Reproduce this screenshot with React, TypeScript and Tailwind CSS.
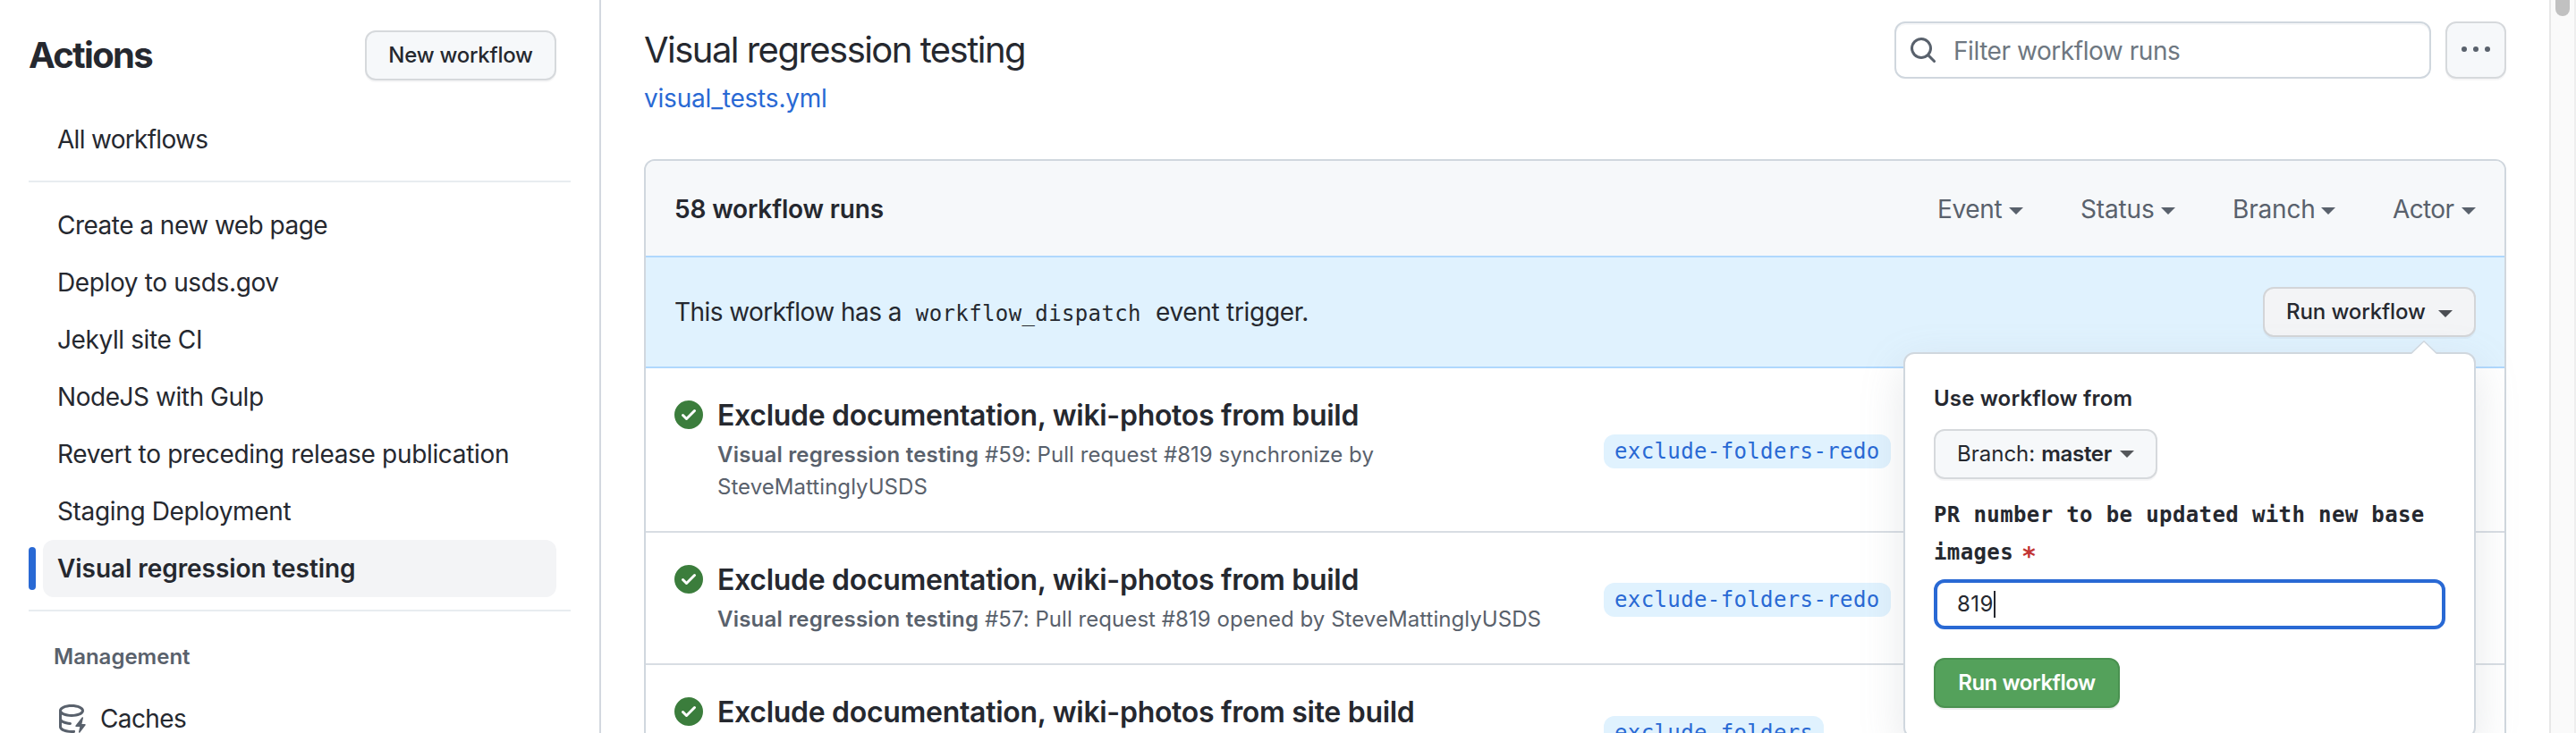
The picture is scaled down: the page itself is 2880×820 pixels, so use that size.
import React from "react";

const MONO = "font-['DejaVu_Sans_Mono',monospace] tracking-[0.38px]";

function Caret({ className = "" }: { className?: string }) {
  return (
    <span
      className={`h-0 w-0 shrink-0 border-x-[8px] border-t-[8px] border-x-transparent border-t-current ${className}`}
    />
  );
}

function SearchIcon() {
  return (
    <svg viewBox="0 0 16 16" className="size-8 shrink-0" fill="currentColor">
      <path
        fillRule="evenodd"
        d="M11.5 7a4.499 4.499 0 11-8.998 0A4.499 4.499 0 0111.5 7zm-.82 4.74a6 6 0 111.06-1.06l3.04 3.04a.75.75 0 11-1.06 1.06l-3.04-3.04z"
      />
    </svg>
  );
}

function KebabIcon() {
  return (
    <svg viewBox="0 0 16 16" className="size-8" fill="currentColor">
      <circle cx="1.5" cy="7.5" r="1.5" />
      <circle cx="8" cy="7.5" r="1.5" />
      <circle cx="14.5" cy="7.5" r="1.5" />
    </svg>
  );
}

function CheckIcon() {
  return (
    <svg viewBox="0 0 16 16" className="mt-9 size-8 shrink-0" fill="#3b7d3c">
      <path
        fillRule="evenodd"
        d="M8 16A8 8 0 108 0a8 8 0 000 16zm3.78-9.72a.75.75 0 00-1.06-1.06L6.75 9.19 5.28 7.72a.75.75 0 00-1.06 1.06l2 2a.75.75 0 001.06 0l4.5-4.5z"
      />
    </svg>
  );
}

function CacheIcon() {
  return (
    <svg viewBox="0 0 16 16" className="size-8 shrink-0 text-[#59616c]" fill="currentColor">
      <path d="M2.5 5.724V8c0 .248.238.7 1.169 1.159.874.43 2.144.745 3.62.822a.75.75 0 1 1-.078 1.498c-1.622-.085-3.102-.432-4.204-.975a5.565 5.565 0 0 1-.507-.28V12.5c0 .133.058.318.282.551.227.237.591.483 1.101.707 1.015.447 2.47.742 4.117.742.406 0 .802-.018 1.183-.052a.751.751 0 1 1 .134 1.494C8.89 15.98 8.45 16 8 16c-1.805 0-3.475-.32-4.721-.869-.623-.274-1.173-.619-1.579-1.041-.408-.425-.7-.964-.7-1.59v-9c0-.626.292-1.165.7-1.591.406-.42.956-.766 1.579-1.04C4.525.32 6.195 0 8 0c1.806 0 3.476.32 4.721.869.623.274 1.173.619 1.579 1.041.408.425.7.964.7 1.59 0 .626-.292 1.165-.7 1.591-.406.42-.956.766-1.578 1.04C11.475 6.68 9.805 7 8 7c-1.805 0-3.475-.32-4.721-.869a6.15 6.15 0 0 1-.779-.407Zm0-2.224c0 .133.058.318.282.551.227.237.591.483 1.101.707C4.898 5.205 6.353 5.5 8 5.5c1.646 0 3.101-.295 4.118-.742.508-.224.873-.471 1.1-.708.224-.232.282-.417.282-.55 0-.133-.058-.318-.282-.551-.227-.237-.591-.483-1.101-.707C11.102 1.795 9.647 1.5 8 1.5c-1.646 0-3.101.295-4.118.742-.508.224-.873.471-1.1.708-.224.232-.282.417-.282.55Z" />
      <path d="M14.49 7.582a.375.375 0 0 0-.66-.313l-3.625 4.625a.375.375 0 0 0 .295.606h2.127l-.619 2.922a.375.375 0 0 0 .666.304l3.125-4.125A.375.375 0 0 0 15.5 11h-1.778l.769-3.418Z" />
    </svg>
  );
}

const workflows = [
  { name: "Create a new web page", track: "tracking-[-0.52px]" },
  { name: "Deploy to usds.gov", track: "tracking-[-0.37px]" },
  { name: "Jekyll site CI", track: "tracking-[-0.4px]" },
  { name: "NodeJS with Gulp", track: "tracking-[-0.45px]" },
  { name: "Revert to preceding release publication", track: "tracking-[-0.33px]" },
  { name: "Staging Deployment", track: "tracking-[-0.35px]" },
];

const filters = [
  { name: "Event", track: "tracking-[-0.37px]", width: "w-[96px]" },
  { name: "Status", track: "tracking-[-0.14px]", width: "w-[106px]" },
  { name: "Branch", track: "tracking-[-0.17px]", width: "w-[115px]" },
  { name: "Actor", track: "tracking-[-0.65px]", width: "w-[93px]" },
];

type Run = { title: string; detail?: string; branch: string; height: string };

const runs: Run[] = [
  {
    title: "Exclude documentation, wiki-photos from build",
    detail: "#59: Pull request #819 synchronize by SteveMattinglyUSDS",
    branch: "exclude-folders-redo",
    height: "h-[184px]",
  },
  {
    title: "Exclude documentation, wiki-photos from build",
    detail: "#57: Pull request #819 opened by SteveMattinglyUSDS",
    branch: "exclude-folders-redo",
    height: "h-[148px]",
  },
  {
    title: "Exclude documentation, wiki-photos from site build",
    branch: "exclude-folders",
    height: "h-[148px]",
  },
];

function Sidebar() {
  return (
    <aside className="h-full w-[672px] shrink-0 border-r-2 border-[#d3d8df] pl-8">
      <div className="flex h-[124px] items-center justify-between pr-12">
        <h2 className="text-[40px] font-bold leading-[60px] tracking-[-1.7px]">Actions</h2>
        <button className="h-14 w-[214px] rounded-xl border-2 border-[#d6d9dc] bg-[#f6f8fa] text-2xl font-medium tracking-[-0.25px] shadow-[0_2px_0_rgba(31,35,40,0.04)]">
          New workflow
        </button>
      </div>
      <nav className="text-[28px]">
        <div className="mr-8 h-20 border-b-2 border-[#e8ecf0] pl-8 leading-[64px] tracking-[-0.7px]">All workflows</div>
        <ul className="mr-8 h-[480px] border-b-2 border-[#e8ecf0] pt-4">
          {workflows.map((w) => (
            <li key={w.name} className={`h-16 pl-8 leading-[64px] ${w.track}`}>
              {w.name}
            </li>
          ))}
          <li className="mr-4 flex h-16 items-center gap-2">
            <span className="h-12 w-2 rounded-full bg-[#2969d4]" />
            <span className="h-16 flex-1 rounded-xl bg-[#f3f4f6] pl-4 font-semibold leading-[64px] tracking-[-0.06px]">
              Visual regression testing
            </span>
          </li>
        </ul>
        <h3 className="mt-8 pl-7 text-2xl font-semibold leading-[38px] text-[#59616c]">Management</h3>
        <div className="mt-[18px] flex h-16 items-center gap-4 pl-8">
          <CacheIcon />
          <span className="tracking-[-0.6px]">Caches</span>
        </div>
      </nav>
    </aside>
  );
}

function DispatchPopup() {
  return (
    <div className="absolute left-[1406px] top-[214px] h-[432px] w-[640px] rounded-xl border-2 border-[#d0d7de] bg-white px-8 shadow-[0_16px_48px_rgba(140,149,159,0.22)]">
      <svg viewBox="0 0 28 16" className="absolute right-[42px] top-[-15px] h-4 w-7">
        <path d="M0 15 14 1 28 15V16H0Z" fill="#fff" />
        <path d="M0 14 14 0.8 28 14" fill="none" stroke="#d0d7de" strokeWidth="1.5" />
      </svg>
      <h4 className="pt-8 text-2xl font-semibold leading-9 tracking-[0.15px]">Use workflow from</h4>
      <button className="mt-4 flex h-14 items-center rounded-xl border-2 border-[#d6d9dc] bg-[#f6f8fa] pl-6 pr-6 text-2xl shadow-[0_2px_0_rgba(31,35,40,0.04)]">
        <span>Branch:</span>
        <span className="ml-[7px] font-semibold tracking-[-0.3px]">master</span>
        <Caret className="ml-[9px] text-[#54575b]" />
      </button>
      <label className={`mt-[19px] block h-[84px] text-2xl font-bold leading-[42px] ${MONO}`}>
        PR number to be updated with new base
        <br />
        images<span className="ml-[9px] align-[-6px] text-[28px] leading-none text-[#c23434]">*</span>
      </label>
      <div className="mt-[9px] flex h-14 w-[572px] items-center rounded-xl border-4 border-[#2969d4] pl-[22px] text-2xl tracking-[0.5px]">
        819
        <span className="h-[30px] w-[2px] bg-[#25282f]" />
      </div>
      <button className="mt-8 h-14 w-[208px] rounded-xl border-2 border-[#4a9150] bg-[#54a15b] text-2xl font-semibold tracking-[-0.45px] text-white shadow-[0_2px_0_rgba(31,35,40,0.08)]">
        Run workflow
      </button>
    </div>
  );
}

function RunRow({ run, last }: { run: Run; last: boolean }) {
  return (
    <li className={`flex shrink-0 border-[#d8dde3] px-8 ${run.height} ${last ? "" : "border-b-2"}`}>
      <CheckIcon />
      <div className="ml-4 w-[960px] pt-[29px]">
        <h3 className="whitespace-nowrap text-[32px] font-semibold leading-[47px] tracking-[-0.3px]">{run.title}</h3>
        {run.detail && (
          <p className="mt-[3px] w-[930px] text-2xl leading-9 tracking-[0.05px] text-[#59616c]">
            <span className="font-semibold tracking-[0.2px]">Visual regression testing</span> {run.detail}
          </p>
        )}
      </div>
      <div className="ml-[31px] flex items-center pt-1">
        <span className={`h-[38px] rounded-xl bg-[#e0f2fe] px-3 text-2xl leading-[38px] text-[#2969d4] ${MONO}`}>
          {run.branch}
        </span>
      </div>
    </li>
  );
}

export default function App() {
  return (
    <div className="flex h-[820px] w-[2880px] overflow-hidden bg-white font-[Inter,sans-serif] text-[#25282f]">
      <Sidebar />
      <main className="h-full flex-1 pl-12 pr-12">
        <header className="flex h-[178px] justify-between pt-6">
          <div>
            <h1 className="text-[40px] leading-[64px] tracking-[-1.53px]">Visual regression testing</h1>
            <a className="mt-[1px] block text-[28px] leading-[42px] tracking-[-0.2px] text-[#2969d4]">visual_tests.yml</a>
          </div>
          <div className="flex gap-4">
            <div className="flex h-16 w-[600px] items-center gap-[18px] rounded-xl border-2 border-[#d0d7de] pl-[14px] text-[28px] tracking-[-0.45px] text-[#59616c] shadow-[inset_0_2px_0_rgba(208,215,222,0.2)]">
              <SearchIcon />
              <span className="mt-[2px] text-[#6e7781]">Filter workflow runs</span>
            </div>
            <button className="flex h-16 w-[68px] items-center justify-center rounded-xl border-2 border-[#d6d9dc] bg-[#f6f8fa] text-[#59616c] shadow-[0_2px_0_rgba(31,35,40,0.04)]">
              <KebabIcon />
            </button>
          </div>
        </header>
        <section className="relative flex h-[720px] flex-col rounded-t-xl border-2 border-[#d0d7de]">
          <div className="flex h-[106px] shrink-0 items-center justify-between rounded-t-[10px] bg-[#f6f8fa] px-8 pt-[2px] text-[28px]">
            <span className="font-semibold tracking-[-0.15px]">58 workflow runs</span>
            <div className="flex gap-16 text-[#59616c]">
              {filters.map((f) => (
                <span key={f.name} className={`flex items-center justify-between ${f.width} ${f.track}`}>
                  {f.name}
                  <Caret className="mt-[3px]" />
                </span>
              ))}
            </div>
          </div>
          <div className="flex h-[126px] shrink-0 items-center justify-between border-y-2 border-[#b0d8fd] bg-[#e0f2fe] px-8 text-[28px]">
            <p className="flex items-baseline">
              <span className="tracking-[-0.56px]">This workflow has a</span>
              <code className={`mx-4 text-2xl ${MONO}`}>workflow_dispatch</code>
              <span className="tracking-[-0.3px]">event trigger.</span>
            </p>
            <button className="flex h-14 w-[238px] items-center justify-between rounded-xl border-2 border-[#d3d5d8] bg-[#f3f4f6] pl-6 pr-6 text-2xl font-medium tracking-[-0.1px] shadow-[0_2px_0_rgba(31,35,40,0.04)]">
              Run workflow
              <Caret className="mt-1 text-[#4b4e53]" />
            </button>
          </div>
          <ul>
            {runs.map((run, i) => (
              <RunRow key={i} run={run} last={i === runs.length - 1} />
            ))}
          </ul>
          <DispatchPopup />
        </section>
      </main>
      <div className="flex h-full w-[30px] shrink-0 justify-center border-x-2 border-l-[#e8e8e8] border-r-[#eeeeee] bg-[#fafafa]">
        <div className="h-[18px] w-4 rounded-b-full bg-[#c1c1c1]" />
      </div>
    </div>
  );
}
